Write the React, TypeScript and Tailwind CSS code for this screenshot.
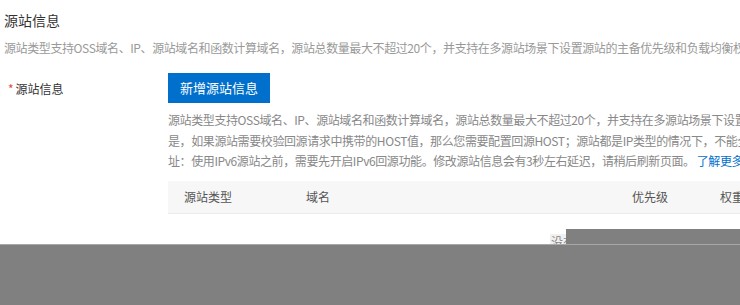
import React from "react";

export default function App() {
  const font = { fontFamily: '"Noto Sans CJK SC", "Noto Sans", sans-serif' };
  return (
    <div
      className="relative w-[740px] h-[305px] overflow-hidden bg-white text-[#333]"
      style={font}
    >
      <div className="pl-[4px] pt-[10px]">
        <div className="text-[14px] leading-[20px] text-[#333]">源站信息</div>
        <div className="mt-[8px] text-[12px] leading-[20px] tracking-[-0.4px] text-[#999] whitespace-nowrap">
          源站类型支持OSS域名、IP、源站域名和函数计算域名，源站总数量最大不超过20个，并支持在多源站场景下设置源站的主备优先级和负载均衡权重。
        </div>
      </div>
      <div className="mt-[15px] flex">
        <div className="w-[168px] shrink-0 pl-[8px] pt-[6px] text-[12px] leading-[20px] text-[#333]">
          <span className="text-[#e84738] mr-[2px]">*</span>源站信息
        </div>
        <div className="flex-1 min-w-0">
          <button className="h-[30px] w-[102px] bg-[#0070cc] text-white text-[13px] leading-[30px]">
            新增源站信息
          </button>
          <div className="mt-[7px] text-[12px] leading-[20.5px] tracking-[-0.4px] text-[#888] whitespace-nowrap">
            <div>源站类型支持OSS域名、IP、源站域名和函数计算域名，源站总数量最大不超过20个，并支持在多源站场景下设置源站的主备优先级和负载均衡权重，需要注意的</div>
            <div>是，如果源站需要校验回源请求中携带的HOST值，那么您需要配置回源HOST；源站都是IP类型的情况下，不能全部设置为IPv6地</div>
            <div>
              址：使用IPv6源站之前，需要先开启IPv6回源功能。修改源站信息会有3秒左右延迟，请稍后刷新页面。
              <span className="ml-[2px] text-[#0070cc]">了解更多</span>
            </div>
          </div>
          <div className="mt-[9px] h-[33px] bg-[#f7f7f7] border-b border-[#ebebeb] flex items-center text-[12px] text-[#555] whitespace-nowrap">
            <div className="w-[138px] shrink-0 pl-[16px]">源站类型</div>
            <div className="w-[326px] shrink-0">域名</div>
            <div className="w-[88px] shrink-0">优先级</div>
            <div className="shrink-0">权重</div>
          </div>
          <div className="h-[40px] relative">
            <div className="absolute left-[382px] top-[20px] bg-[#f0f0f0] px-[1px] text-[12px] leading-[16px] text-[#888] whitespace-nowrap">
              没有数据
            </div>
          </div>
        </div>
      </div>
      <div className="absolute left-[566px] top-[229px] right-0 bottom-0 bg-[#808080]" />
      <div className="absolute left-0 top-[244px] right-0 bottom-0 bg-[#808080] border-t border-[#a8a8a8]" />
    </div>
  );
}
